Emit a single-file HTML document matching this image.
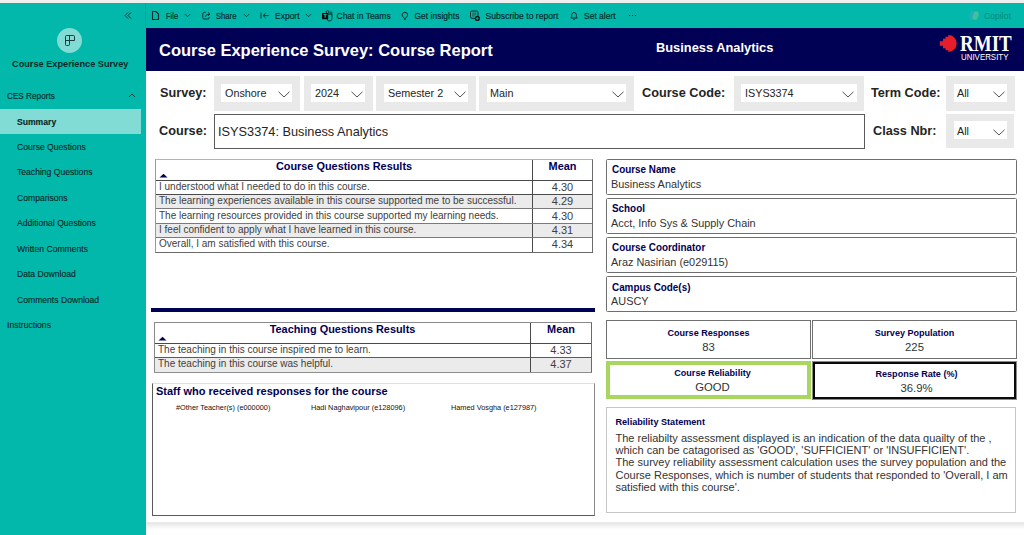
<!DOCTYPE html>
<html><head><meta charset="utf-8">
<style>
*{margin:0;padding:0;box-sizing:border-box}
html,body{width:1024px;height:535px;overflow:hidden;background:#fff;font-family:"Liberation Sans",sans-serif}
.a{position:absolute;white-space:nowrap}
#topstrip{left:0;top:0;width:1024px;height:3px;background:#efefef}
#side{left:0;top:3px;width:146px;height:532px;background:#01b8aa}
#tool{left:146px;top:3px;width:878px;height:25px;background:#01b8aa}
#navy{left:146px;top:28px;width:878px;height:43px;background:#000054}
#canvas{left:146px;top:71px;width:878px;height:451px;background:#fff}
#shadow{left:146px;top:522px;width:878px;height:13px;background:linear-gradient(#ededed 0,#e7e7e7 1.5px,#f2f2f2 4px,#fafafa 6px,#fff 8px)}
.nav{font-size:8.6px;color:#0a2826;line-height:10px;-webkit-text-stroke:0.12px #0a2826}
.tb{font-size:8.5px;color:#072a27;line-height:10px;-webkit-text-stroke:0.15px #072a27}
.lbl{font-size:12.7px;font-weight:bold;color:#252423;line-height:14px}
.slc{background:#e9e9e9}
.slw{background:#fff}
.slt{font-size:10.8px;color:#252423;line-height:12px}
.chev{width:11px;height:6px}
.th{font-size:10.9px;font-weight:bold;color:#000054;line-height:12px}
.td{font-size:10px;color:#404040;line-height:12px}
.tm{font-size:11px;color:#404040;line-height:12px;width:59px;text-align:center}
.st{font-size:7.33px;color:#111;line-height:9px}
.card{width:411px;height:36px;border:1px solid #6e6e6e;border-radius:1.5px}
.cl{font-size:10.5px;font-weight:bold;color:#000054;line-height:11px;transform:scaleX(0.94);transform-origin:0 0}
.cv{font-size:10.9px;color:#333;line-height:12px}
.kc{width:205px;height:39px}
.kl{width:205px;text-align:center;font-size:9.65px;font-weight:bold;color:#000054;line-height:10px;transform:scaleX(0.94)}
.kv{width:205px;text-align:center;font-size:11.3px;color:#333;line-height:12px}
</style></head><body>
<div class="a" id="topstrip"></div>
<div class="a" id="side"></div>
<div class="a" id="tool"></div>
<div class="a" id="navy"></div>
<div class="a" id="canvas"></div>
<div class="a" id="shadow"></div>

<!-- sidebar -->
<div class="a" style="left:57px;top:28px;width:25px;height:25px;border-radius:50%;background:#80dcd4"></div>
<div class="a nav" style="left:7px;top:91.7px;font-size:8.2px">CES Reports</div>
<div class="a" style="left:0;top:109px;width:141px;height:25px;background:#80dcd4"></div>
<div class="a nav" style="left:17px;top:117px;font-weight:bold">Summary</div>
<div class="a nav" style="left:17px;top:142px">Course Questions</div>
<div class="a nav" style="left:17px;top:167px">Teaching Questions</div>
<div class="a nav" style="left:17px;top:193px">Comparisons</div>
<div class="a nav" style="left:17px;top:218px">Additional Questions</div>
<div class="a nav" style="left:17px;top:244px">Written Comments</div>
<div class="a nav" style="left:17px;top:269px">Data Download</div>
<div class="a nav" style="left:17px;top:295px">Comments Download</div>
<div class="a nav" style="left:7px;top:320px">Instructions</div>
<div class="a" style="left:12px;top:58.5px;font-size:9.2px;font-weight:bold;color:#0d2927;line-height:10px">Course Experience Survey</div>

<!-- header -->
<div class="a" style="left:159px;top:41px;font-size:16.5px;font-weight:bold;color:#fff;line-height:18px">Course Experience Survey: Course Report</div>
<div class="a" style="left:656px;top:41px;font-size:12.85px;font-weight:bold;color:#fff;line-height:14px">Business Analytics</div>

<!-- filters -->
<div class="a lbl" style="left:160px;top:86px">Survey:</div>
<div class="a lbl" style="left:159px;top:124px">Course:</div>
<div class="a lbl" style="left:642px;top:86px">Course Code:</div>
<div class="a lbl" style="left:871px;top:86px">Term Code:</div>
<div class="a lbl" style="left:873px;top:124px">Class Nbr:</div>


<!-- slicers -->
<div class="a slc" style="left:214px;top:76px;width:86px;height:35px"></div>
<div class="a slw" style="left:221px;top:84px;width:71px;height:18px"></div>
<div class="a slt" style="left:225px;top:87px">Onshore</div>
<svg class="a" style="left:277.5px;top:90.5px" width="12" height="7" viewBox="0 0 12 7"><path d="M0.5 0.8 L6 6 L11.5 0.8" fill="none" stroke="#4a4a4a" stroke-width="0.95"/></svg>

<div class="a slc" style="left:304px;top:76px;width:69px;height:35px"></div>
<div class="a slw" style="left:311px;top:84px;width:54px;height:18px"></div>
<div class="a slt" style="left:315px;top:87px">2024</div>
<svg class="a" style="left:350.5px;top:90.5px" width="12" height="7" viewBox="0 0 12 7"><path d="M0.5 0.8 L6 6 L11.5 0.8" fill="none" stroke="#4a4a4a" stroke-width="0.95"/></svg>

<div class="a slc" style="left:376px;top:76px;width:100px;height:35px"></div>
<div class="a slw" style="left:384px;top:84px;width:84px;height:18px"></div>
<div class="a slt" style="left:388px;top:87px">Semester 2</div>
<svg class="a" style="left:453.5px;top:90.5px" width="12" height="7" viewBox="0 0 12 7"><path d="M0.5 0.8 L6 6 L11.5 0.8" fill="none" stroke="#4a4a4a" stroke-width="0.95"/></svg>

<div class="a slc" style="left:479px;top:76px;width:155px;height:35px"></div>
<div class="a slw" style="left:487px;top:84px;width:139px;height:18px"></div>
<div class="a slt" style="left:490px;top:87px">Main</div>
<svg class="a" style="left:611.5px;top:90.5px" width="12" height="7" viewBox="0 0 12 7"><path d="M0.5 0.8 L6 6 L11.5 0.8" fill="none" stroke="#4a4a4a" stroke-width="0.95"/></svg>

<div class="a slc" style="left:734px;top:76px;width:130px;height:35px"></div>
<div class="a slw" style="left:741px;top:84px;width:116px;height:18px"></div>
<div class="a slt" style="left:745px;top:87px">ISYS3374</div>
<svg class="a" style="left:841.5px;top:90.5px" width="12" height="7" viewBox="0 0 12 7"><path d="M0.5 0.8 L6 6 L11.5 0.8" fill="none" stroke="#4a4a4a" stroke-width="0.95"/></svg>

<div class="a slc" style="left:946px;top:76px;width:69px;height:35px"></div>
<div class="a slw" style="left:954px;top:84px;width:53px;height:18px"></div>
<div class="a slt" style="left:957px;top:87px">All</div>
<svg class="a" style="left:992.5px;top:90.5px" width="12" height="7" viewBox="0 0 12 7"><path d="M0.5 0.8 L6 6 L11.5 0.8" fill="none" stroke="#4a4a4a" stroke-width="0.95"/></svg>

<div class="a slc" style="left:946px;top:114px;width:68px;height:34px"></div>
<div class="a slw" style="left:954px;top:121px;width:53px;height:18px"></div>
<div class="a slt" style="left:957px;top:124.6px">All</div>
<svg class="a" style="left:992.5px;top:128.5px" width="12" height="7" viewBox="0 0 12 7"><path d="M0.5 0.8 L6 6 L11.5 0.8" fill="none" stroke="#4a4a4a" stroke-width="0.95"/></svg>

<div class="a" style="left:214px;top:114px;width:651px;height:35px;border:1px solid #5a5a5a"></div>
<div class="a" style="left:218px;top:125px;font-size:12.75px;color:#252423;line-height:14px">ISYS3374: Business Analytics</div>

<!-- course questions table -->
<div class="a" style="left:155px;top:159px;width:438px;height:94px;border:1px solid #6a6a6a;border-top-color:#b4b4b4;border-left-color:#9a9a9a"></div>
<div class="a" style="left:156px;top:195px;width:436px;height:14px;background:#ebebeb"></div>
<div class="a" style="left:156px;top:224px;width:436px;height:14px;background:#ebebeb"></div>
<div class="a" style="left:532px;top:160px;width:1px;height:92px;background:#4a4a4a"></div>
<div class="a" style="left:156px;top:180px;width:436px;height:1px;background:#4a4a4a"></div>
<div class="a" style="left:156px;top:194px;width:436px;height:1px;background:#4a4a4a"></div>
<div class="a" style="left:156px;top:208px;width:436px;height:1px;background:#7a7a7a"></div>
<div class="a" style="left:156px;top:223px;width:436px;height:1px;background:#7a7a7a"></div>
<div class="a" style="left:156px;top:237px;width:436px;height:1px;background:#7a7a7a"></div>
<div class="a th" style="left:156px;top:160px;width:376px;text-align:center">Course Questions Results</div>
<div class="a th" style="left:533px;top:160px;width:59px;text-align:center">Mean</div>
<svg class="a" style="left:159px;top:173px" width="9" height="5" viewBox="0 0 9 5"><path d="M0.5 4.5 L4.5 0.7 L8.5 4.5Z" fill="#000054"/></svg>
<div class="a td" style="left:159px;top:181.00px">I understood what I needed to do in this course.</div>
<div class="a td" style="left:159px;top:195.00px">The learning experiences available in this course supported me to be successful.</div>
<div class="a td" style="left:159px;top:210.00px">The learning resources provided in this course supported my learning needs.</div>
<div class="a td" style="left:159px;top:224.00px">I feel confident to apply what I have learned in this course.</div>
<div class="a td" style="left:159px;top:238.00px">Overall, I am satisfied with this course.</div>
<div class="a tm" style="left:533px;top:180.50px">4.30</div>
<div class="a tm" style="left:533px;top:194.50px">4.29</div>
<div class="a tm" style="left:533px;top:209.50px">4.30</div>
<div class="a tm" style="left:533px;top:223.50px">4.31</div>
<div class="a tm" style="left:533px;top:237.50px">4.34</div>

<div class="a" style="left:151px;top:308px;width:444px;height:4px;background:#000054"></div>

<!-- teaching questions table -->
<div class="a" style="left:154px;top:322px;width:438px;height:51px;border:1px solid #6a6a6a;border-top-color:#8a8a8a;border-bottom-color:#8e8e8e;border-left-color:#8a8a8a"></div>
<div class="a" style="left:155px;top:358px;width:436px;height:14px;background:#ebebeb"></div>
<div class="a" style="left:530px;top:323px;width:1px;height:49px;background:#4a4a4a"></div>
<div class="a" style="left:155px;top:343px;width:436px;height:1px;background:#4a4a4a"></div>
<div class="a" style="left:155px;top:357px;width:436px;height:1px;background:#5a5a5a"></div>
<div class="a th" style="left:155px;top:323px;width:375px;text-align:center">Teaching Questions Results</div>
<div class="a th" style="left:531px;top:323px;width:60px;text-align:center">Mean</div>
<svg class="a" style="left:158px;top:336px" width="9" height="5" viewBox="0 0 9 5"><path d="M0.5 4.5 L4.5 0.7 L8.5 4.5Z" fill="#000054"/></svg>
<div class="a td" style="left:158px;top:344.00px">The teaching in this course inspired me to learn.</div>
<div class="a td" style="left:158px;top:358.00px">The teaching in this course was helpful.</div>
<div class="a tm" style="left:531px;top:343.50px;width:60px">4.33</div>
<div class="a tm" style="left:531px;top:357.50px;width:60px">4.37</div>

<!-- staff box -->
<div class="a" style="left:152px;top:383px;width:443px;height:133px;border:1px solid #5a5a5a;border-top-color:#e0e0e0;border-right-color:#8a8a8a"></div>
<div class="a" style="left:156px;top:385px;font-size:11px;font-weight:bold;color:#000054;line-height:12px">Staff who received responses for the course</div>
<div class="a st" style="left:176px;top:403px">#Other Teacher(s) (e000000)</div>
<div class="a st" style="left:311px;top:403px">Hadi Naghavipour (e128096)</div>
<div class="a st" style="left:451px;top:403px">Hamed Vosgha (e127987)</div>

<!-- info cards -->
<div class="a card" style="left:606px;top:159px"></div>
<div class="a cl" style="left:612px;top:164.35px">Course Name</div>
<div class="a cv" style="left:611px;top:177.7px">Business Analytics</div>
<div class="a card" style="left:606px;top:198px"></div>
<div class="a cl" style="left:612px;top:203.45px">School</div>
<div class="a cv" style="left:611px;top:217.4px">Acct, Info Sys &amp; Supply Chain</div>
<div class="a card" style="left:606px;top:237px"></div>
<div class="a cl" style="left:612px;top:242.15px">Course Coordinator</div>
<div class="a cv" style="left:611px;top:256.2px">Araz Nasirian (e029115)</div>
<div class="a card" style="left:606px;top:276px"></div>
<div class="a cl" style="left:612px;top:281.65px">Campus Code(s)</div>
<div class="a cv" style="left:611px;top:294.9px">AUSCY</div>

<!-- kpi cards -->
<div class="a kc" style="left:606px;top:320px;border:1px solid #707070"></div>
<div class="a kl" style="left:606px;top:327.50px">Course Responses</div>
<div class="a kv" style="left:606px;top:340.7px">83</div>
<div class="a kc" style="left:812px;top:320px;border:1px solid #707070"></div>
<div class="a kl" style="left:812px;top:327.50px">Survey Population</div>
<div class="a kv" style="left:812px;top:340.7px">225</div>
<div class="a kc" style="left:606px;top:361px;height:38px;border:4px solid #a9d65e"></div>
<div class="a kl" style="left:610px;top:367.70px">Course Reliability</div>
<div class="a kv" style="left:610px;top:381px">GOOD</div>
<div class="a kc" style="left:813px;top:362px;width:203px;height:37px;border:2px solid #0a0a0a;box-shadow:0 0 0 1px #8a8a8a"></div>
<div class="a kl" style="left:814px;top:369.10px">Response Rate (%)</div>
<div class="a kv" style="left:814px;top:382px">36.9%</div>

<!-- reliability statement -->
<div class="a" style="left:606px;top:407px;width:410px;height:106px;border:1px solid #c6c6c6"></div>
<div class="a" style="left:615.5px;top:416.6px;font-size:9.1px;font-weight:bold;color:#000054;line-height:10px">Reliability Statement</div>
<div class="a" style="left:615.5px;top:432px;font-size:11px;color:#333;line-height:12.2px;white-space:pre">The reliabilty assessment displayed is an indication of the data quailty of the ,
which can be catagorised as 'GOOD', 'SUFFICIENT' or 'INSUFFICIENT'.
The survey reliability assessment calculation uses the survey population and the
Course Responses, which is number of students that responded to 'Overall, I am
satisfied with this course'.</div>

<!-- toolbar -->
<div class="a" style="left:145px;top:3px;width:1px;height:25px;background:#00a89b"></div>
<svg class="a" style="left:124px;top:11px" width="8" height="9" viewBox="0 0 8 9"><path d="M4 1.5 L1 4.5 L4 7.5 M7 1.5 L4 4.5 L7 7.5" fill="none" stroke="#0d3a36" stroke-width="1"/></svg>
<svg class="a" style="left:128px;top:93px" width="8" height="5" viewBox="0 0 8 5"><path d="M1 4 L4 1 L7 4" fill="none" stroke="#0d3a36" stroke-width="1"/></svg>
<svg class="a" style="left:64px;top:35px" width="12" height="11" viewBox="0 0 12 11"><path d="M1.5 1.5 Q1.5 0.5 2.5 0.5 H9.5 Q10.5 0.5 10.5 1.5 V5.5 H5.5 V9.5 Q5.5 10.5 4.5 10.5 H2.5 Q1.5 10.5 1.5 9.5 Z M1.5 5.5 H5.5 M5.5 0.5 V5.5" fill="none" stroke="#1a3b39" stroke-width="1"/></svg>

<svg class="a" style="left:151px;top:10px" width="9" height="11" viewBox="0 0 9 11"><path d="M1.5 1.5 H5 L7.5 4 V9.5 H1.5 Z" fill="none" stroke="#0b2e2b" stroke-width="1.1"/></svg>
<div class="a tb" style="left:165.5px;top:10.8px;transform:scaleX(0.88);transform-origin:0 0">File</div>
<svg class="a" style="left:184px;top:13px" width="7" height="5" viewBox="0 0 7 5"><path d="M1 1.2 L3.5 3.7 L6 1.2" fill="none" stroke="#0b2e2b" stroke-width="0.9"/></svg>

<svg class="a" style="left:201px;top:10px" width="11" height="11" viewBox="0 0 11 11"><path d="M4.6 2.4 H3.2 Q1.8 2.4 1.8 3.8 V7.6 Q1.8 9 3.2 9 H6.8 Q8.2 9 8.2 7.6 V7" fill="none" stroke="#0b2e2b" stroke-width="1"/><path d="M4.2 6.8 Q4.6 4.2 8.6 4.1 M7.1 2.5 L8.8 4.1 L7.1 5.7" fill="none" stroke="#0b2e2b" stroke-width="1"/></svg>
<div class="a tb" style="left:216px;top:10.8px;transform:scaleX(0.9);transform-origin:0 0">Share</div>
<svg class="a" style="left:243px;top:13px" width="7" height="5" viewBox="0 0 7 5"><path d="M1 1.2 L3.5 3.7 L6 1.2" fill="none" stroke="#0b2e2b" stroke-width="0.9"/></svg>

<svg class="a" style="left:259px;top:10px" width="11" height="11" viewBox="0 0 11 11"><path d="M2 2.6 V8.6 M4.2 5.6 H9.6 M6.5 3.3 L4.2 5.6 L6.5 7.9" fill="none" stroke="#0b2e2b" stroke-width="0.95"/></svg>
<div class="a tb" style="left:275px;top:10.8px">Export</div>
<svg class="a" style="left:305px;top:13px" width="7" height="5" viewBox="0 0 7 5"><path d="M1 1.2 L3.5 3.7 L6 1.2" fill="none" stroke="#0b2e2b" stroke-width="0.9"/></svg>

<svg class="a" style="left:321px;top:9px" width="13" height="13" viewBox="0 0 13 13"><circle cx="6.6" cy="3" r="1.4" fill="none" stroke="#0b2e2b" stroke-width="0.9"/><circle cx="10" cy="3.9" r="1.1" fill="none" stroke="#0b3a36" stroke-width="0.8"/><path d="M6 5.2 H11 V8.8 A2.6 2.6 0 0 1 5.9 10" fill="none" stroke="#0b2e2b" stroke-width="0.9"/><rect x="1" y="4" width="6.2" height="6.2" fill="#050f0e"/><path d="M2.6 5.6 H5.6 M4.1 5.6 V8.8" stroke="#2ab5a8" stroke-width="1"/></svg>
<div class="a tb" style="left:336.5px;top:10.8px">Chat in Teams</div>

<svg class="a" style="left:401px;top:10px" width="9" height="11" viewBox="0 0 9 11"><path d="M3.9 2.3 A2.7 2.7 0 0 1 6.6 5 C6.6 6.4 5.2 7.2 4.6 8.4 H3.2 C2.6 7.2 1.2 6.4 1.2 5 A2.7 2.7 0 0 1 3.9 2.3 Z M3.2 9.4 H4.6" fill="none" stroke="#0b2e2b" stroke-width="1"/></svg>
<div class="a tb" style="left:414.5px;top:10.8px">Get insights</div>

<svg class="a" style="left:469px;top:9px" width="13" height="13" viewBox="0 0 13 13"><rect x="1.5" y="2" width="7.5" height="7.3" rx="1.3" fill="none" stroke="#0b2e2b" stroke-width="1"/><path d="M3 3.5 H7.5 V5.5 L4.5 7.8 H3 Z" fill="#1f7a72"/><circle cx="8.3" cy="9.4" r="2.6" fill="#071a18"/><path d="M8.3 8.1 V10.7 M7 9.4 H9.6" stroke="#01b8aa" stroke-width="0.9"/></svg>
<div class="a tb" style="left:485.5px;top:10.8px;font-size:8.65px">Subscribe to report</div>

<svg class="a" style="left:570px;top:10px" width="9" height="11" viewBox="0 0 9 11"><path d="M4 2.6 C5.6 2.6 6.4 3.8 6.4 5.2 V6.8 L7.3 8 H0.9 L1.7 6.8 V5.2 C1.7 3.8 2.5 2.6 4 2.6 Z M3 8.8 C3.3 9.6 4.8 9.6 5.1 8.8" fill="none" stroke="#0b2e2b" stroke-width="1"/></svg>
<div class="a tb" style="left:584px;top:10.8px">Set alert</div>
<div class="a" style="left:629px;top:15px;width:1.2px;height:1.2px;background:#0b2e2b"></div>
<div class="a" style="left:632px;top:15px;width:1.2px;height:1.2px;background:#0b2e2b"></div>
<div class="a" style="left:635px;top:15px;width:1.2px;height:1.2px;background:#0b2e2b"></div>

<svg class="a" style="left:968px;top:10px" width="12" height="11" viewBox="0 0 12 11"><path d="M3 1.5 C5 0.5 7 1 7.5 3 L6 8 C5.5 9.5 4 10 2.5 9.5 C1 8.5 1 6 2 4 Z" fill="#3fa9c9" opacity="0.55"/><path d="M9 9.5 C7 10.5 5 10 4.5 8 L6 3 C6.5 1.5 8 1 9.5 1.5 C11 2.5 11 5 10 7 Z" fill="#7cc58a" opacity="0.55"/></svg>
<div class="a" style="left:984px;top:10.8px;font-size:8.7px;line-height:10px;color:#078a80">Copilot</div>

<!-- RMIT logo -->
<svg class="a" style="left:939px;top:34px" width="19" height="19" viewBox="0 0 19 19"><path d="M9.3 1.1 A8.4 8.4 0 1 1 9.3 17.9 V16.3 H6.5 V14.3 H4 V11.8 H0.8 V7.2 H4 V4.7 H6.5 V2.7 H9.3 Z" fill="#e61e2a"/></svg>
<div class="a" style="left:960px;top:30px;font-family:'Liberation Serif',serif;font-size:23.5px;font-weight:bold;color:#fff;line-height:26px;transform:scaleX(0.81);transform-origin:0 0">RMIT</div>
<div class="a" style="left:961px;top:52px;font-size:8.7px;color:#fff;line-height:10px;transform:scaleX(0.91);transform-origin:0 0">UNIVERSITY</div>
</body></html>
